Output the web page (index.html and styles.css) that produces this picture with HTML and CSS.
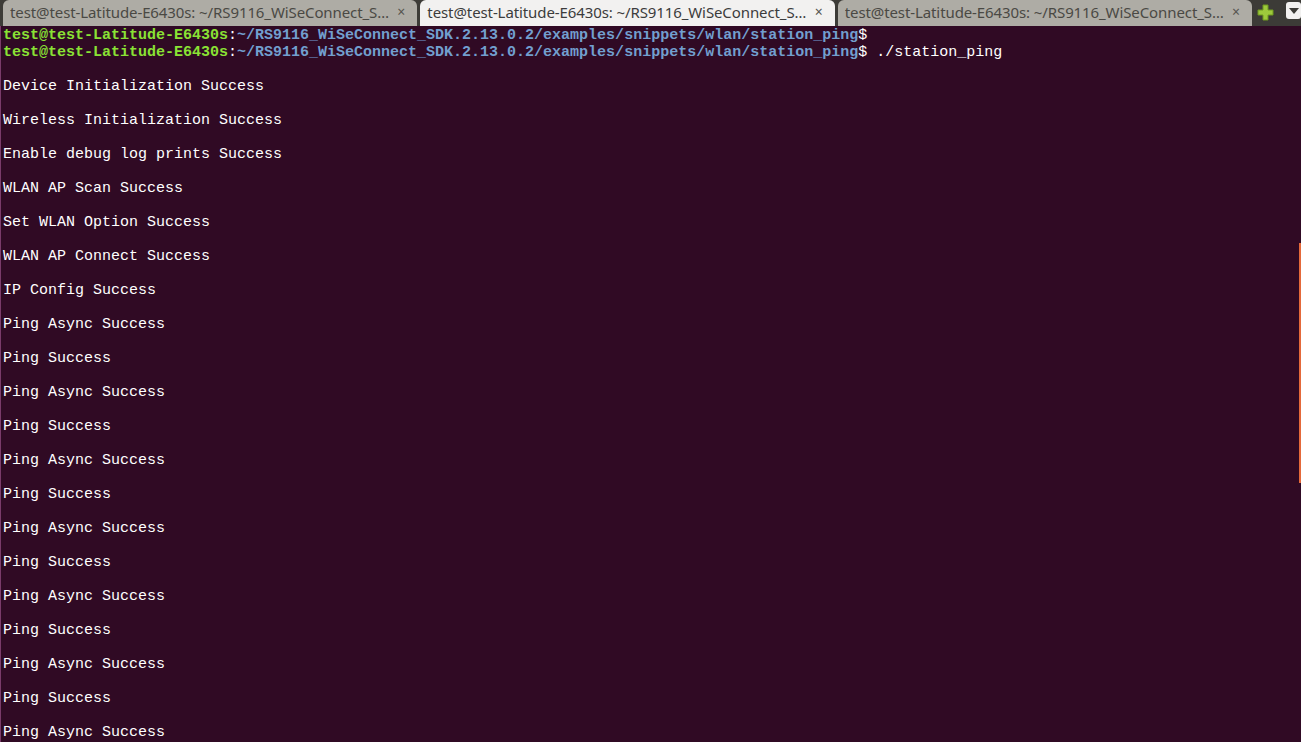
FILE: index.html
```html
<!DOCTYPE html>
<html>
<head>
<meta charset="utf-8">
<link rel="stylesheet" href="styles.css">
</head>
<body>
<div class="window">
  <div class="tabbar">
    <div class="tab inactive"><span class="tab-title">test@test-Latitude-E6430s: ~/RS9116_WiSeConnect_S…</span><span class="tab-close">×</span></div>
    <div class="tab active"><span class="tab-title">test@test-Latitude-E6430s: ~/RS9116_WiSeConnect_S…</span><span class="tab-close">×</span></div>
    <div class="tab inactive"><span class="tab-title">test@test-Latitude-E6430s: ~/RS9116_WiSeConnect_S…</span><span class="tab-close">×</span></div>
    <div class="newtab">
      <svg width="17" height="17" viewBox="0 0 17 17"><path d="M6 1h5v5h5v5h-5v5H6v-5H1V6h5z" fill="#9dc93c" stroke="#6f9a1e" stroke-width="1"/></svg>
    </div>
    <div class="menubtn">
      <svg width="10" height="6" viewBox="0 0 10 6"><path d="M0 0h10L5 6z" fill="#3c3b37"/></svg>
    </div>
  </div>
  <div class="terminal">
    <div class="scroll"></div>
    <div class="out">
      <div class="line"><span class="u">test@test-Latitude-E6430s</span>:<span class="p">~/RS9116_WiSeConnect_SDK.2.13.0.2/examples/snippets/wlan/station_ping</span>$</div>
      <div class="line"><span class="u">test@test-Latitude-E6430s</span>:<span class="p">~/RS9116_WiSeConnect_SDK.2.13.0.2/examples/snippets/wlan/station_ping</span>$ ./station_ping</div>
      <div class="line"></div>
      <div class="line">Device Initialization Success</div>
      <div class="line"></div>
      <div class="line">Wireless Initialization Success</div>
      <div class="line"></div>
      <div class="line">Enable debug log prints Success</div>
      <div class="line"></div>
      <div class="line">WLAN AP Scan Success</div>
      <div class="line"></div>
      <div class="line">Set WLAN Option Success</div>
      <div class="line"></div>
      <div class="line">WLAN AP Connect Success</div>
      <div class="line"></div>
      <div class="line">IP Config Success</div>
      <div class="line"></div>
      <div class="line">Ping Async Success</div>
      <div class="line"></div>
      <div class="line">Ping Success</div>
      <div class="line"></div>
      <div class="line">Ping Async Success</div>
      <div class="line"></div>
      <div class="line">Ping Success</div>
      <div class="line"></div>
      <div class="line">Ping Async Success</div>
      <div class="line"></div>
      <div class="line">Ping Success</div>
      <div class="line"></div>
      <div class="line">Ping Async Success</div>
      <div class="line"></div>
      <div class="line">Ping Success</div>
      <div class="line"></div>
      <div class="line">Ping Async Success</div>
      <div class="line"></div>
      <div class="line">Ping Success</div>
      <div class="line"></div>
      <div class="line">Ping Async Success</div>
      <div class="line"></div>
      <div class="line">Ping Success</div>
      <div class="line"></div>
      <div class="line">Ping Async Success</div>
    </div>
  </div>
</div>
</body>
</html>
```
FILE: styles.css
```css
html, body {
  margin: 0;
  padding: 0;
  background: #300a24;
  overflow: hidden;
}
.window {
  width: 1301px;
  height: 742px;
  display: flex;
  flex-direction: column;
  overflow: hidden;
}
.tabbar {
  height: 26px;
  background: #3c3b37;
  display: flex;
  align-items: flex-end;
  padding-left: 3px;
  gap: 3px;
  flex-shrink: 0;
}
.tab {
  width: 415px;
  height: 26px;
  box-sizing: border-box;
  border-radius: 6px 6px 0 0;
  display: flex;
  align-items: center;
  padding: 0 10px 3px 7px;
  font-family: "Noto Sans", "DejaVu Sans", sans-serif;
  font-size: 15px;
  color: #4a4944;
  white-space: nowrap;
}
.tab.inactive {
  background: #aeaca5;
}
.tab.active {
  background: #f2f1f0;
  color: #3c3c3c;
}
.tab-title {
  flex: 1;
  overflow: hidden;
  letter-spacing: -0.1px;
}
.tab-close {
  font-size: 14px;
  color: #55544f;
  width: 12px;
  text-align: center;
}
.newtab {
  width: 20px;
  height: 26px;
  display: flex;
  align-items: center;
  justify-content: center;
  padding-bottom: 2px;
  box-sizing: border-box;
}
.menubtn {
  width: 15px;
  height: 17px;
  margin: 0 0 5px 8px;
  background: #f2f1f0;
  border-radius: 3px;
  display: flex;
  align-items: center;
  justify-content: center;
  align-self: center;
}
.terminal {
  flex: 1;
  position: relative;
  background: #300a24;
  border-left: 1px solid #7a3b6a;
  padding-left: 2px;
  padding-top: 1px;
  overflow: hidden;
}
.scroll {
  position: absolute;
  right: 0;
  top: 217px;
  width: 2px;
  height: 240px;
  background: #e4693a;
}
.out {
  font-family: "Liberation Mono", "DejaVu Sans Mono", monospace;
  font-size: 15px;
  color: #ffffff;
}
.line {
  height: 17px;
  line-height: 17px;
  white-space: pre;
}
.u {
  color: #8ae234;
  font-weight: bold;
}
.p {
  color: #729fcf;
  font-weight: bold;
}
```
